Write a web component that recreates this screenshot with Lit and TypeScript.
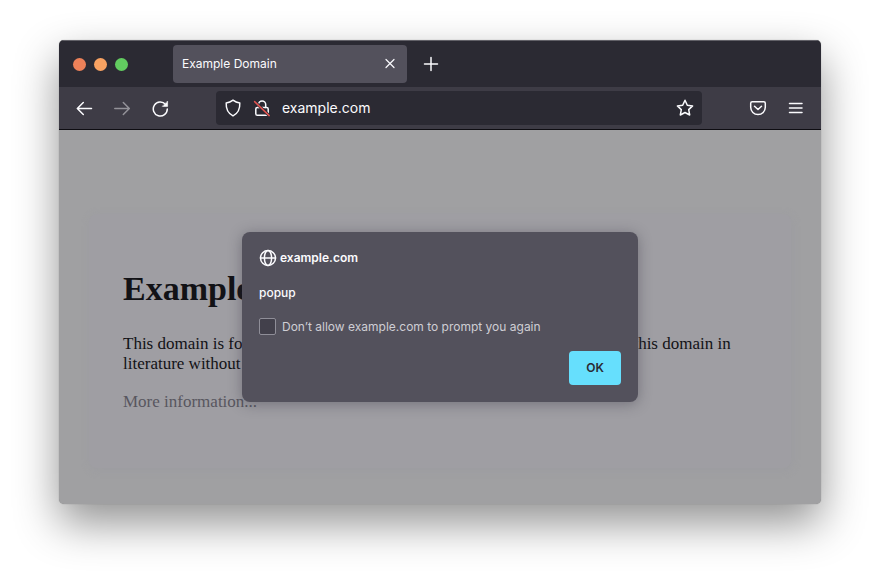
import { LitElement, html, css, svg } from "lit";
import { customElement, property } from "lit/decorators.js";

const icons: Record<string, unknown> = {
  back: svg`<path d="M16.5 9.500H2.500M8.300 3.500L2.300 9.500l6 6" />`,
  forward: svg`<path d="M1.800 9.500h14.300M10.300 3.500l6 6-6 6" />`,
  reload: svg`<path d="M14.600 5.400A7 7 0 1 0 16.300 10" /><path d="M16.600 2.400v5h-5z" fill="currentColor" stroke-width="0.600" />`,
  shield: svg`<path d="M9 1.200c2.200 1.700 4.400 2.400 6.800 2.700.3 5.800-1.600 10.400-6.800 13-5.200-2.600-7.100-7.200-6.800-13C4.600 3.600 6.800 2.900 9 1.200z" />`,
  lock: svg`<path d="M5.500 8.500V5.600a3.600 3.600 0 0 1 7.200 0v2.900" /><rect x="2.800" y="8.500" width="12.400" height="7.800" rx="1.600" /><path d="M1.600 2.600l14.600 14" stroke="#2b2a33" stroke-width="3" /><path d="M1.600 2.600l14.600 14" stroke="#e0524f" stroke-width="1.500" />`,
  star: svg`<path d="M9 1.300l2.300 4.900 5.300.7-3.900 3.700 1 5.400L9 13.500 4.300 16l1-5.400L1.400 6.900l5.300-.7z" />`,
  pocket: svg`<path d="M3.200 2.800h11.600a1.500 1.500 0 0 1 1.500 1.500v4a7.300 7.300 0 0 1-14.600 0v-4a1.500 1.500 0 0 1 1.500-1.500z" /><path d="M5.500 7.200L9 10.500l3.500-3.300" />`,
  menu: svg`<path d="M2.500 4.500h12.500M2.500 9h12.500M2.500 13.500h12.500" />`,
  close: svg`<path d="M5 4.500l8 8M13 4.500l-8 8" stroke-width="1.200" />`,
  plus: svg`<path d="M9 2.500v13M2.500 9h13" />`,
  globe: svg`<circle cx="9" cy="9" r="7.500" /><ellipse cx="9" cy="9" rx="3.600" ry="7.500" /><path d="M1.500 9h15" />`,
};

@customElement("ui-icon")
export class UiIcon extends LitElement {
  @property() name = "";

  static styles = css`
    :host {
      display: block;
      width: 18px;
      height: 18px;
    }
    .glyph {
      display: block;
      fill: none;
      stroke: currentColor;
      stroke-width: 1.5;
      stroke-linecap: round;
      stroke-linejoin: round;
    }
  `;

  render() {
    return html`<svg class="glyph" width="18" height="18" viewBox="0 0 18 18" aria-hidden="true">
      ${icons[this.name]}
    </svg>`;
  }
}

@customElement("app-root")
export class AppRoot extends LitElement {
  static styles = css`
    :host {
      display: flex;
      box-sizing: border-box;
      min-height: 100vh;
      padding: 40px 59px 78px;
      background: #fff;
      color: #fbfbfe;
      font-family: Inter, "Liberation Sans", sans-serif;
      font-size: 12px;
      line-height: 16px;
    }
    * {
      box-sizing: border-box;
    }
    button {
      display: grid;
      place-items: center;
      flex: none;
      padding: 0;
      border: 0;
      background: none;
      color: inherit;
      font: inherit;
    }
    .window {
      display: flex;
      flex-direction: column;
      flex: 1;
      min-width: 0;
      border-radius: 5px;
      overflow: hidden;
      background: #a0a0a2;
      box-shadow: 0 19px 44px rgba(0, 0, 0, 0.43), 0 0 1px rgba(0, 0, 0, 0.4);
    }
    .tabs {
      display: flex;
      align-items: center;
      height: 47px;
      padding: 0 14px;
      border-top: 1px solid #626168;
      background: #2b2a33;
    }
    .lights {
      display: flex;
      gap: 8px;
      width: 100px;
    }
    .light {
      width: 13px;
      height: 13px;
      border-radius: 50%;
    }
    .red {
      background: #ed8159;
    }
    .amber {
      background: #f9a262;
    }
    .green {
      background: #62cc60;
    }
    .tab {
      display: flex;
      align-items: center;
      justify-content: space-between;
      width: 234px;
      height: 38px;
      padding: 0 8px 0 9px;
      border-radius: 4px;
      background: #53515c;
    }
    .add {
      margin-left: 15px;
    }
    .toolbar {
      display: flex;
      align-items: center;
      height: 43px;
      padding: 0 16px;
      border-bottom: 1px solid #0e0d12;
      background: #3e3c46;
    }
    .nav,
    .actions {
      display: flex;
      gap: 20px;
    }
    .off {
      opacity: 0.45;
    }
    .address {
      display: flex;
      align-items: center;
      gap: 11px;
      flex: 1;
      min-width: 0;
      height: 34px;
      margin: 0 47px;
      padding: 0 8px;
      border-radius: 4px;
      background: #2b2a33;
    }
    .url {
      flex: 1;
      min-width: 0;
      height: 20px;
      padding: 0;
      border: 0;
      outline: 0;
      background: none;
      color: inherit;
      font: 14px/20px Inter, "Liberation Sans", sans-serif;
    }
    .page {
      position: relative;
      flex: 1;
      padding: 84px 30px 36px;
      color: #121216;
      font: 17px/20px "Liberation Serif", serif;
    }
    .card {
      height: 100%;
      padding: 55px 34px 0;
      border-radius: 8px;
      background: #9f9ea3;
      box-shadow: 1px 2px 6px 3px rgba(150, 149, 158, 0.2);
    }
    .heading {
      margin: 0 0 25px;
      font-size: 34px;
      line-height: 40px;
    }
    .text {
      margin: 0 0 18px;
    }
    .more {
      color: #58565f;
      text-decoration: none;
    }
    .veil {
      position: absolute;
      inset: 0;
      display: grid;
      place-items: center;
      color: #fbfbfe;
      font: 12px/16px Inter, "Liberation Sans", sans-serif;
    }
    .prompt {
      position: static;
      display: flex;
      flex-direction: column;
      width: 396px;
      max-width: 100%;
      margin: 0;
      padding: 17px;
      border: 0;
      border-radius: 8px;
      background: #53515c;
      color: inherit;
      box-shadow: 0 2px 14px rgba(50, 48, 62, 0.4);
    }
    .origin {
      display: flex;
      align-items: center;
      gap: 3px;
      margin: 0;
      font-size: 12px;
      line-height: 18px;
      font-weight: 600;
    }
    .message {
      margin: 18px 0 17px;
      font-weight: 500;
    }
    .choice {
      display: flex;
      align-items: center;
      gap: 6px;
      color: #cfced4;
    }
    .box {
      appearance: none;
      width: 17px;
      height: 17px;
      margin: 0;
      border: 1px solid #8f8e98;
      border-radius: 2px;
      background: #42404b;
    }
    .ok {
      align-self: flex-end;
      width: 52px;
      height: 34px;
      margin-top: 16px;
      border-radius: 4px;
      background: #66dffd;
      color: #2b2a33;
      font-weight: 600;
    }
  `;

  render() {
    return html`
      <main class="window">
        <header class="tabs">
          <div class="lights">
            <button class="light red" aria-label="Close window"></button>
            <button class="light amber" aria-label="Minimize"></button>
            <button class="light green" aria-label="Zoom"></button>
          </div>
          <div class="tab">
            <span>Example Domain</span>
            <button aria-label="Close tab"><ui-icon name="close"></ui-icon></button>
          </div>
          <button class="add" aria-label="New tab"><ui-icon name="plus"></ui-icon></button>
        </header>
        <nav class="toolbar">
          <div class="nav">
            <button aria-label="Back"><ui-icon name="back"></ui-icon></button>
            <button class="off" aria-label="Forward"><ui-icon name="forward"></ui-icon></button>
            <button aria-label="Reload"><ui-icon name="reload"></ui-icon></button>
          </div>
          <div class="address">
            <button aria-label="Tracking protection"><ui-icon name="shield"></ui-icon></button>
            <button aria-label="Connection not secure"><ui-icon name="lock"></ui-icon></button>
            <input class="url" type="text" aria-label="Address" .value=${"example.com"} />
            <button aria-label="Bookmark"><ui-icon name="star"></ui-icon></button>
          </div>
          <div class="actions">
            <button aria-label="Save to Pocket"><ui-icon name="pocket"></ui-icon></button>
            <button aria-label="Menu"><ui-icon name="menu"></ui-icon></button>
          </div>
        </nav>
        <section class="page">
          <article class="card">
            <h1 class="heading">Example Domain</h1>
            <p class="text">
              This domain is for use in illustrative examples in documents. You may use this domain in
              literature without prior coordination or asking for permission.
            </p>
            <a class="more" href="#more">More information...</a>
          </article>
          <div class="veil">
            <dialog class="prompt" open aria-labelledby="origin">
              <h2 class="origin" id="origin"><ui-icon name="globe"></ui-icon>example.com</h2>
              <p class="message">popup</p>
              <label class="choice">
                <input class="box" type="checkbox" />Don’t allow example.com to prompt you again
              </label>
              <button class="ok">OK</button>
            </dialog>
          </div>
        </section>
      </main>
    `;
  }
}
